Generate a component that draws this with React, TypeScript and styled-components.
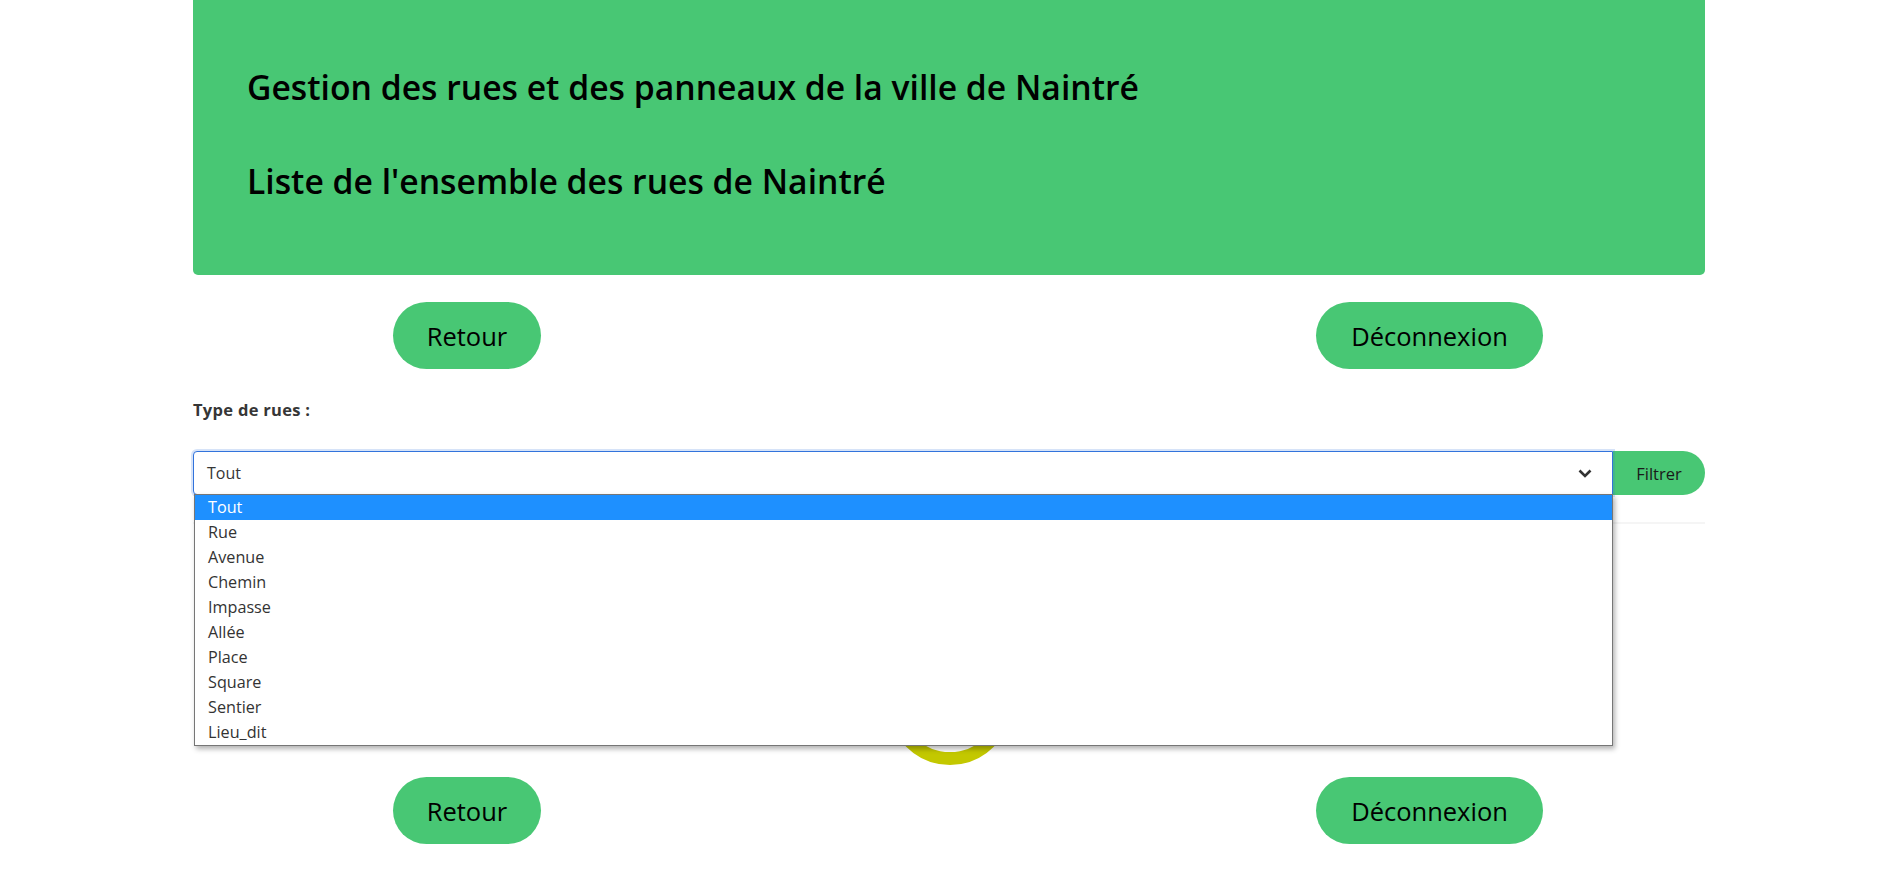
import React from "react";
import styled, { createGlobalStyle } from "styled-components";

const GlobalStyle = createGlobalStyle`
  html, body { margin: 0; padding: 0; background: #ffffff; }
  body { font-family: "Open Sans", "Noto Sans", sans-serif; color: #000; }
  * { box-sizing: border-box; }
`;

const GREEN = "#48c774";

const Page = styled.div`
  width: 1512px;
  margin-left: 193px;
  display: flex;
  flex-direction: column;
`;

const Header = styled.header`
  background: ${GREEN};
  height: 275px;
  border-radius: 0 0 5px 5px;
  padding: 67px 54px 0;
  display: flex;
  flex-direction: column;
  gap: 54px;
`;

const Title = styled.h1`
  margin: 0;
  font-family: "Open Sans", "Noto Sans", sans-serif;
  font-size: 33.7px;
  font-weight: 600;
  line-height: 40px;
  color: #000;
`;

const ButtonRow = styled.div<{ $top: number }>`
  margin-top: ${(p) => p.$top}px;
  height: 67px;
  padding: 0 162px 0 200px;
  display: flex;
  justify-content: space-between;
  align-items: center;
`;

const PillButton = styled.button<{ $w: number }>`
  width: ${(p) => p.$w}px;
  height: 67px;
  border: none;
  border-radius: 34px;
  background: ${GREEN};
  color: #000;
  font-family: "Open Sans", "Noto Sans", sans-serif;
  font-size: 25.5px;
  padding: 0;
  cursor: pointer;
`;

const Label = styled.label`
  margin-top: 31px;
  font-family: "Open Sans", "Noto Sans", sans-serif;
  font-weight: 700;
  font-size: 16.5px;
  letter-spacing: 0.3px;
  line-height: 20px;
  color: #363636;
`;

const FilterRow = styled.div`
  margin-top: 31px;
  display: flex;
  height: 44px;
`;

const SelectWrap = styled.div`
  position: relative;
  flex: 1;
`;

const SelectBox = styled.div`
  height: 44px;
  border: 1px solid #3273dc;
  border-radius: 4px 0 0 4px;
  box-shadow: 0 0 0 2px rgba(50, 115, 220, 0.2);
  background: #fff;
  display: flex;
  align-items: center;
  justify-content: space-between;
  padding: 0 20px 0 13px;
  font-family: "Open Sans", "Noto Sans", sans-serif;
  font-size: 16px;
  color: #363636;
`;

const FilterButton = styled.button`
  width: 92px;
  height: 44px;
  border: none;
  border-radius: 0 22px 22px 0;
  background: ${GREEN};
  color: #1a1a1a;
  font-family: "Open Sans", "Noto Sans", sans-serif;
  font-size: 16.5px;
  padding: 0;
`;

const OptionList = styled.ul`
  position: absolute;
  top: 43px;
  left: 1px;
  right: 0;
  margin: 0;
  padding: 0;
  list-style: none;
  background: #fff;
  border: 1px solid #767676;
  box-shadow: 2px 3px 5px rgba(0, 0, 0, 0.3);
  z-index: 10;
`;

const Option = styled.li<{ $active?: boolean }>`
  height: 25px;
  line-height: 25px;
  padding-left: 13px;
  font-family: "Open Sans", "Noto Sans", sans-serif;
  font-size: 16.2px;
  background: ${(p) => (p.$active ? "#1e90ff" : "#fff")};
  color: ${(p) => (p.$active ? "#fff" : "#333")};
`;

const Divider = styled.hr`
  margin: 27px 0 0;
  border: none;
  height: 2px;
  background: #f5f5f5;
`;

const SpinnerBox = styled.div`
  margin-top: 117px;
  height: 124px;
  display: flex;
  justify-content: center;
  padding-left: 2px;
`;

const options = [
  "Tout",
  "Rue",
  "Avenue",
  "Chemin",
  "Impasse",
  "Allée",
  "Place",
  "Square",
  "Sentier",
  "Lieu_dit",
];

export default function App() {
  return (
    <>
      <GlobalStyle />
      <Page>
        <Header>
          <Title>Gestion des rues et des panneaux de la ville de Naintré</Title>
          <Title>Liste de l'ensemble des rues de Naintré</Title>
        </Header>

        <ButtonRow $top={27}>
          <PillButton $w={148}>Retour</PillButton>
          <PillButton $w={227}>Déconnexion</PillButton>
        </ButtonRow>

        <Label>Type de rues :</Label>

        <FilterRow>
          <SelectWrap>
            <SelectBox>
              <span>Tout</span>
              <svg width="14" height="9" viewBox="0 0 14 9">
                <polyline
                  points="1.5,1.5 7,7 12.5,1.5"
                  fill="none"
                  stroke="#333"
                  strokeWidth="2.6"
                />
              </svg>
            </SelectBox>
            <OptionList>
              {options.map((o, i) => (
                <Option key={o} $active={i === 0}>
                  {o}
                </Option>
              ))}
            </OptionList>
          </SelectWrap>
          <FilterButton>Filtrer</FilterButton>
        </FilterRow>

        <Divider />

        <SpinnerBox>
          <svg width="124" height="124" viewBox="0 0 124 124">
            <circle cx="62" cy="62" r="55.5" fill="none" stroke="#c3c800" strokeWidth="13" />
          </svg>
        </SpinnerBox>

        <ButtonRow $top={12}>
          <PillButton $w={148}>Retour</PillButton>
          <PillButton $w={227}>Déconnexion</PillButton>
        </ButtonRow>
      </Page>
    </>
  );
}
